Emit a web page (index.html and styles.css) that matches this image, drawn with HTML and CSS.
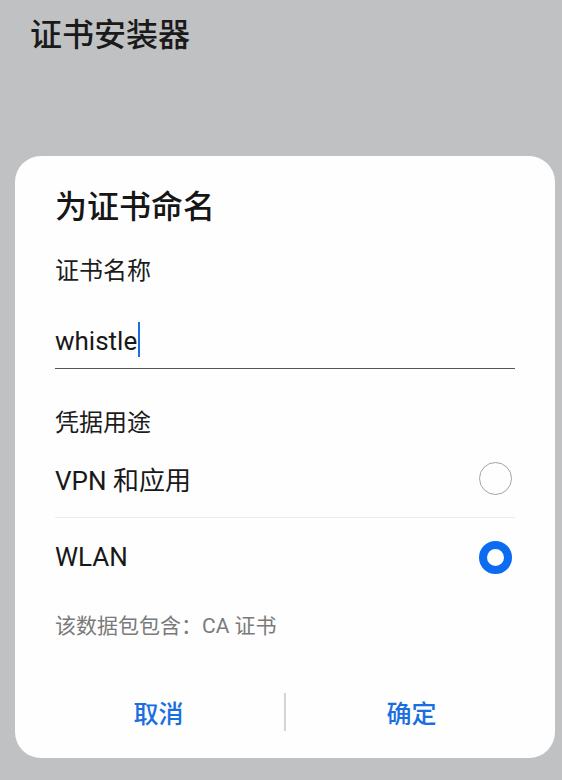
FILE: index.html
```html
<!DOCTYPE html>
<html lang="zh-CN">
<head>
<meta charset="utf-8">
<title>证书安装器</title>
<link rel="stylesheet" href="styles.css">
</head>
<body>
<header class="appbar">证书安装器</header>
<div class="dialog">
  <h1 class="dialog-title">为证书命名</h1>
  <div class="label">证书名称</div>
  <div class="input"><span class="input-text">whistle</span><span class="caret"></span></div>
  <div class="label label-usage">凭据用途</div>
  <div class="option">
    <span class="option-text">VPN 和应用</span>
    <span class="radio"></span>
  </div>
  <div class="option">
    <span class="option-text">WLAN</span>
    <span class="radio radio-on"></span>
  </div>
  <div class="note">该数据包包含：CA 证书</div>
  <div class="actions">
    <button class="action">取消</button>
    <span class="action-sep"></span>
    <button class="action">确定</button>
  </div>
</div>
</body>
</html>
```
FILE: styles.css
```css
* { box-sizing: border-box; }
html, body {
  margin: 0;
  padding: 0;
}
body {
  width: 562px;
  height: 780px;
  overflow: hidden;
  background: #c0c1c3;
  font-family: Roboto, "Noto Sans CJK SC", sans-serif;
  color: #181818;
}
.appbar {
  padding: 15px 0 0 30px;
  height: 55px;
  font-size: 32px;
  line-height: 40px;
  font-weight: 500;
  color: #1a1a1a;
}
.dialog {
  margin: 101px 0 0 15px;
  width: 540px;
  height: 602px;
  background: #fefefe;
  border-radius: 26px;
  padding: 31px 40px 0;
  display: flex;
  flex-direction: column;
}
.dialog-title {
  margin: 0;
  font-size: 32px;
  line-height: 40px;
  font-weight: 500;
  color: #161616;
}
.label {
  margin-top: 28px;
  font-size: 24px;
  line-height: 32px;
  color: #1c1c1c;
}
.input {
  margin-top: 34px;
  display: flex;
  align-items: center;
  height: 48px;
  padding-bottom: 11px;
  border-bottom: 1px solid #555;
  font-size: 26px;
  line-height: 36px;
}
.input-text {
  color: #181818;
  position: relative;
  top: 2px;
}
.caret {
  display: inline-block;
  width: 2px;
  height: 35px;
  margin-left: 1px;
  background: #1a6ee0;
}
.label-usage { margin-top: 38px; }
.option {
  height: 78px;
  display: flex;
  align-items: center;
  justify-content: space-between;
  font-size: 26px;
}
.option + .option {
  border-top: 1px solid #ececec;
  height: 79px;
}
.radio {
  width: 33px;
  height: 33px;
  border-radius: 50%;
  border: 1.5px solid #a3a3a3;
  margin-right: 3px;
}
.radio-on {
  border: 8.5px solid #0b6cf1;
}
.note {
  margin-top: 15px;
  font-size: 21px;
  line-height: 30px;
  color: #7a7a7a;
}
.actions {
  margin: 43px -22px 0;
  height: 56px;
  display: flex;
  align-items: center;
}
.action {
  flex: 1;
  height: 56px;
  border: 0;
  background: none;
  font-family: inherit;
  font-size: 25px;
  font-weight: 500;
  color: #1a6ee0;
  padding: 0;
}
.action-sep {
  width: 2px;
  height: 38px;
  background: #d4d4d4;
}
```
